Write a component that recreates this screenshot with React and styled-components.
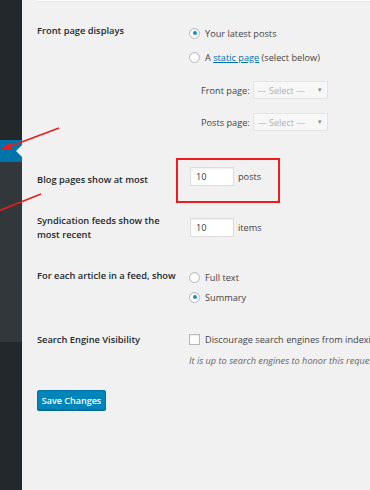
import React from "react";
import styled, { createGlobalStyle } from "styled-components";

const Global = createGlobalStyle`
  html, body { margin: 0; padding: 0; background: #f1f1f1; }
  body { font-family: "Open Sans", "Noto Sans", sans-serif; color: #444; }
  * { box-sizing: border-box; }
`;

const Layout = styled.div`
  position: relative;
  display: flex;
  width: 370px;
  height: 490px;
  overflow: hidden;
  background: #f1f1f1;
`;

const Sidebar = styled.nav`
  width: 22px;
  flex: none;
  display: flex;
  flex-direction: column;
  background: #23282d;
`;

const SideBlock = styled.div`
  height: ${(p) => p.$h}px;
  flex: ${(p) => (p.$grow ? 1 : "none")};
  background: ${(p) => p.$bg};
  position: relative;
`;

const Notch = styled.span`
  position: absolute;
  right: 0;
  top: 50%;
  transform: translateY(-50%);
  width: 0;
  height: 0;
  border-top: 6px solid transparent;
  border-bottom: 6px solid transparent;
  border-right: 6px solid #f1f1f1;
`;

const Main = styled.main`
  flex: 1;
  min-width: 0;
  padding: 0 0 0 15px;
`;

const TopRule = styled.div`
  height: 2px;
  background: #fbfbfb;
  border-bottom: 1px solid #e9e9e9;
`;

const Row = styled.div`
  display: grid;
  grid-template-columns: 152px 1fr;
  margin-top: ${(p) => p.$top}px;
  white-space: nowrap;
`;

const Label = styled.div`
  font-size: 9.3px;
  font-weight: 600;
  line-height: 14px;
  color: #23282d;
  margin-top: ${(p) => p.$top || 0}px;
  white-space: normal;
  padding-right: 10px;
`;

const Field = styled.div`
  display: flex;
  flex-direction: column;
  font-size: 9.2px;
  color: #444;
  min-width: 0;
`;

const Line = styled.label`
  display: flex;
  align-items: center;
  height: 20px;
  gap: 5px;
  margin-top: ${(p) => p.$top || 0}px;
`;

const Radio = styled.span`
  width: 11px;
  height: 11px;
  flex: none;
  border-radius: 50%;
  background: #fff;
  border: 1px solid #b4b9be;
  box-shadow: inset 0 1px 2px rgba(0, 0, 0, 0.08);
  display: grid;
  place-items: center;
  &::after {
    content: "";
    width: 4px;
    height: 4px;
    border-radius: 50%;
    background: ${(p) => (p.$checked ? "#1e8cbe" : "transparent")};
  }
`;

const Check = styled.span`
  width: 11px;
  height: 11px;
  flex: none;
  background: #fff;
  border: 1px solid #b4b9be;
  box-shadow: inset 0 1px 2px rgba(0, 0, 0, 0.08);
`;

const Link = styled.a`
  color: #0073aa;
  text-decoration: underline;
`;

const SelectRow = styled.div`
  display: flex;
  align-items: center;
  margin-top: ${(p) => p.$top}px;
  padding-left: 12px;
  gap: 3px;
`;

const Select = styled.div`
  width: 75px;
  height: 18px;
  display: flex;
  align-items: center;
  justify-content: space-between;
  padding: 0 4px 0 4px;
  background: #f7f7f7;
  border: 1px solid #e4e4e4;
  color: #b0b0b0;
  font-size: 9px;
`;

const Caret = styled.span`
  font-size: 6px;
  color: #888;
`;

const InputLine = styled.div`
  display: flex;
  align-items: center;
  gap: 4px;
  padding-left: 1px;
  margin-top: ${(p) => p.$top || 0}px;
`;

const Annotated = styled.div`
  position: relative;
  &::before {
    content: "";
    position: absolute;
    left: -13px;
    top: -9px;
    width: 100px;
    height: 41px;
    border: 2px solid #f01c1c;
    pointer-events: none;
  }
`;

const NumberBox = styled.div`
  width: 44px;
  height: 19px;
  background: #fff;
  border: 1px solid #ddd;
  box-shadow: inset 0 1px 2px rgba(0, 0, 0, 0.07);
  padding-left: 5px;
  display: flex;
  align-items: center;
  font-size: 9.2px;
  color: #32373c;
`;

const Description = styled.p`
  margin: 5px 0 0 0;
  font-size: 9.2px;
  line-height: 14px;
  font-style: italic;
  color: #666;
`;

const Button = styled.button`
  margin-top: ${(p) => p.$top}px;
  width: 69px;
  height: 20px;
  padding: 0;
  background: #0085ba;
  border: 1px solid #0073aa;
  border-radius: 2px;
  box-shadow: 0 1px 0 #006799;
  color: #fff;
  font-family: inherit;
  font-size: 9px;
  font-weight: 600;
`;

const Arrows = styled.svg`
  position: absolute;
  left: 0;
  top: 0;
  width: 80px;
  height: 230px;
  pointer-events: none;
`;

export default function App() {
  return (
    <>
      <Global />
      <Layout>
        <Sidebar>
          <SideBlock $h={140} $bg="#23282d" />
          <SideBlock $h={22} $bg="#0073aa">
            <Notch />
          </SideBlock>
          <SideBlock $h={180} $bg="#32373c" />
          <SideBlock $grow $bg="#23282d" />
        </Sidebar>
        <Main>
          <TopRule />
          <Row $top={21}>
            <Label $top={1}>Front page displays</Label>
            <Field>
              <Line>
                <Radio $checked />
                Your latest posts
              </Line>
              <Line $top={4}>
                <Radio />
                <span>
                  A <Link>static page</Link> (select below)
                </span>
              </Line>
              <SelectRow $top={14}>
                Front page:
                <Select>
                  — Select —<Caret>▼</Caret>
                </Select>
              </SelectRow>
              <SelectRow $top={14}>
                Posts page:
                <Select>
                  — Select —<Caret>▼</Caret>
                </Select>
              </SelectRow>
            </Field>
          </Row>
          <Row $top={36}>
            <Label $top={6}>Blog pages show at most</Label>
            <Field>
              <Annotated>
                <InputLine>
                  <NumberBox>10</NumberBox>
                  posts
                </InputLine>
              </Annotated>
            </Field>
          </Row>
          <Row $top={27}>
            <Label $top={0}>Syndication feeds show the most recent</Label>
            <Field>
              <InputLine $top={4}>
                <NumberBox>10</NumberBox>
                items
              </InputLine>
            </Field>
          </Row>
          <Row $top={25}>
            <Label $top={2}>For each article in a feed, show</Label>
            <Field>
              <Line>
                <Radio />
                Full text
              </Line>
              <Line>
                <Radio $checked />
                Summary
              </Line>
            </Field>
          </Row>
          <Row $top={22}>
            <Label $top={4}>Search Engine Visibility</Label>
            <Field>
              <Line>
                <Check />
                Discourage search engines from indexing this site
              </Line>
              <Description>
                It is up to search engines to honor this request.
              </Description>
            </Field>
          </Row>
          <Button $top={22}>Save Changes</Button>
        </Main>
        <Arrows viewBox="0 0 80 230">
          <line x1="59" y1="128" x2="3" y2="149" stroke="#ea1c1c" strokeWidth="1.6" />
          <polygon points="0,150 10,142 12,149" fill="#ea1c1c" />
          <line x1="41" y1="194" x2="-4" y2="212" stroke="#ea1c1c" strokeWidth="1.6" />
        </Arrows>
      </Layout>
    </>
  );
}
